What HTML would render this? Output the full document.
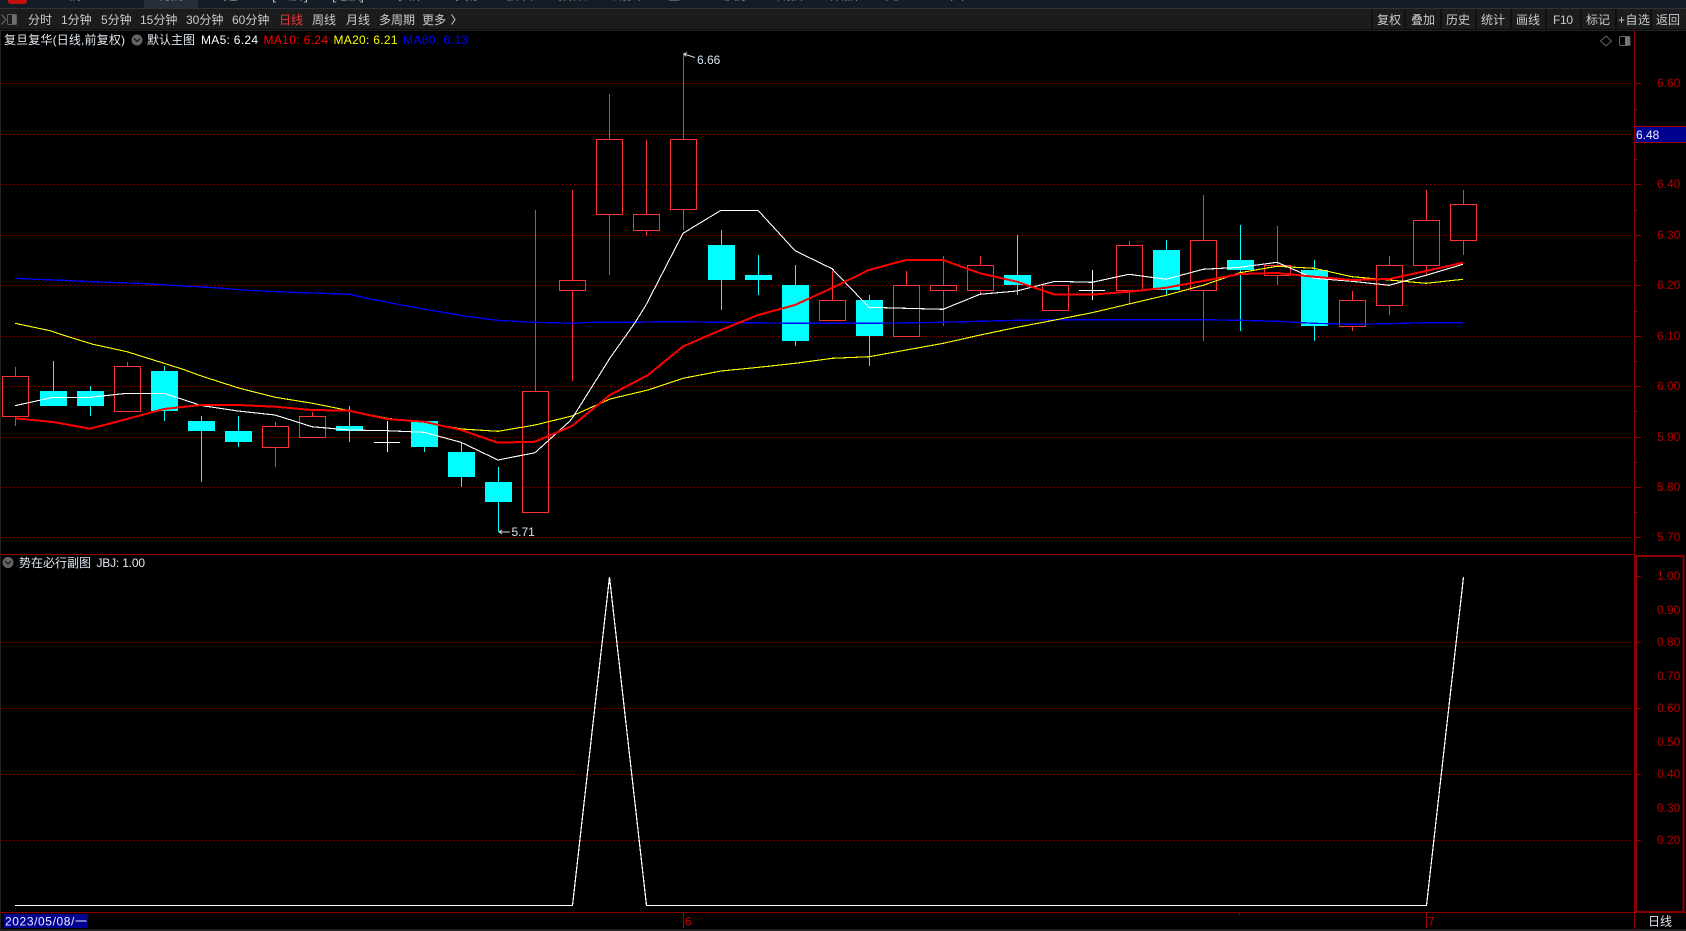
<!DOCTYPE html>
<html lang="zh-CN">
<head>
<meta charset="utf-8">
<title>复旦复华</title>
<style>
html,body{margin:0;padding:0;background:#000;width:1686px;height:931px;overflow:hidden}
svg{display:block;position:absolute;left:0;top:0}
text{font-family:"Liberation Sans","Noto Sans CJK SC",sans-serif;font-size:12px;white-space:pre}
.t{fill:#c8ccd0}
.h{fill:#dfe6ee}
.a{fill:#b00000}
.n{fill:#b8bcc0;font-size:14px}
</style>
</head>
<body>
<svg width="1686" height="931" viewBox="0 0 1686 931" xmlns="http://www.w3.org/2000/svg">
<rect width="1686" height="931" fill="#000"/>
<!-- top strip -->
<rect x="0" y="0" width="1686" height="8" fill="#141c26"/>
<rect x="0" y="8" width="1686" height="1" fill="#2b343e"/>
<rect x="144" y="0" width="54" height="8" fill="#262e38"/>
<path d="M8 0h19v2l-2 2h-15l-2-2z" fill="#c01010"/>
<g>
<text class="n" x="68" y="-0.5" textLength="9">情</text>
<text class="n" x="158" y="-0.5" textLength="26">行情</text>
<text class="n" x="222" y="-0.5" textLength="16">自选</text>
<text class="n" x="272" y="-0.5" textLength="36">[A股]</text>
<text class="n" x="332" y="-0.5" textLength="32">[港股]</text>
<text class="n" x="398" y="-0.5" textLength="22">资讯</text>
<text class="n" x="455" y="-0.5" textLength="24">交易</text>
<text class="n" x="505" y="-0.5" textLength="28">板块</text>
<text class="n" x="558" y="-0.5" textLength="29">指数</text>
<text class="n" x="613" y="-0.5" textLength="28">期货</text>
<text class="n" x="667" y="-0.5" textLength="28">基金</text>
<text class="n" x="723" y="-0.5" textLength="26">债券</text>
<text class="n" x="777" y="-0.5" textLength="26">期权</text>
<text class="n" x="830" y="-0.5" textLength="28">数据</text>
<text class="n" x="885" y="-0.5" textLength="20">图表</text>
<text class="n" x="938" y="-0.5" textLength="26">工具</text>
</g>
<!-- toolbar -->
<rect x="0" y="9" width="1686" height="20" fill="#1c1c1c"/>
<rect x="0" y="29" width="1686" height="1" fill="#0c0c0c"/>
<rect x="0" y="30" width="1686" height="1" fill="#222"/>
<path d="M1.5 14.5l4.5 5-4.5 5" fill="none" stroke="#666" stroke-width="1.2"/>
<rect x="7.5" y="14.5" width="9" height="10" rx="1" fill="#1c1c1c" stroke="#5e5e5e"/>
<rect x="12" y="15" width="4" height="9" fill="#707070"/>
<text class="t" x="28" y="24">分时</text>
<text class="t" x="61" y="24">1分钟</text>
<text class="t" x="101" y="24">5分钟</text>
<text class="t" x="140" y="24">15分钟</text>
<text class="t" x="186" y="24">30分钟</text>
<text class="t" x="232" y="24">60分钟</text>
<text x="279" y="24" fill="#f03636">日线</text>
<text class="t" x="312" y="24">周线</text>
<text class="t" x="346" y="24">月线</text>
<text class="t" x="379" y="24">多周期</text>
<text class="t" x="422" y="24">更多</text>
<path d="M451.5 14.5l3.5 5-3.5 5" fill="none" stroke="#c8ccd0"/>
<path d="M1372 9v20M1405 9v20M1441 9v20M1476 9v20M1511 9v20M1546 9v20M1581 9v20M1616 9v20M1651 9v20" stroke="#0c0c0c" stroke-width="1.5" fill="none"/>
<text class="t" x="1377" y="24">复权</text>
<text class="t" x="1411" y="24">叠加</text>
<text class="t" x="1446" y="24">历史</text>
<text class="t" x="1481" y="24">统计</text>
<text class="t" x="1516" y="24">画线</text>
<text class="t" x="1553" y="24" textLength="20">F10</text>
<text class="t" x="1586" y="24">标记</text>
<text class="t" x="1618" y="24" textLength="32">+自选</text>
<text class="t" x="1656" y="24">返回</text>
<!-- left edge -->
<rect x="0" y="31" width="1" height="898" fill="#222"/>
<g shape-rendering="crispEdges">
<!-- grid -->
<path d="M2 83.5H1634M2 134.5H1634M2 184.5H1634M2 235.5H1634M2 285.5H1634M2 336.5H1634M2 386.5H1634M2 437.5H1634M2 487.5H1634M2 537.5H1634M2 642.5H1634M2 708.5H1634M2 774.5H1634M2 840.5H1634" stroke="#b00000" stroke-dasharray="1 3" fill="none"/>
<!-- cyan candles -->
<path d="M53.5 361V391M90.5 386V416M164.5 366V421M201.5 416V482M238.5 416V447M349.5 406V442M424.5 421V452M461.5 442V487M498.5 467V532M721.5 230V310M758.5 255V295M795.5 265V346M869.5 295V366M1017.5 235V295M1166.5 240V295M1240.5 225V331M1314.5 260V341" stroke="#00ffff" fill="none"/>
<path d="M40 391h27v15h-27zM77 391h27v15h-27zM151 371h27v40h-27zM188 421h27v10h-27zM225 431h27v11h-27zM336 426h27v5h-27zM411 421h27v26h-27zM448 452h27v25h-27zM485 482h27v20h-27zM708 245h27v35h-27zM745 275h27v5h-27zM782 285h27v56h-27zM856 300h27v36h-27zM1004 275h27v10h-27zM1153 250h27v40h-27zM1227 260h27v10h-27zM1301 270h27v56h-27z" fill="#00ffff"/>
<!-- red candles -->
<path fill="none" stroke="#ff3232" d="M15.5 367V376M2.5 376.5h26v40h-26zM15.5 417V426
M127.5 362V366M114.5 366.5h26v45h-26z
M275.5 422V426M262.5 426.5h26v21h-26zM275.5 448V467
M312.5 412V416M299.5 416.5h26v21h-26z
M535.5 210V391M522.5 391.5h26v121h-26z
M572.5 190V280M559.5 280.5h26v10h-26zM572.5 291V381
M609.5 94V139M596.5 139.5h26v75h-26zM609.5 215V275
M646.5 140V214M633.5 214.5h26v16h-26zM646.5 231V235
M683.5 53V139M670.5 139.5h26v70h-26zM683.5 210V230
M832.5 271V300M819.5 300.5h26v20h-26z
M906.5 271V285M893.5 285.5h26v51h-26z
M943.5 256V285M930.5 285.5h26v5h-26zM943.5 291V326
M980.5 256V265M967.5 265.5h26v25h-26zM980.5 291V294
M1042.5 285.5h26v25h-26z
M1129.5 241V245M1116.5 245.5h26v45h-26zM1129.5 291V304
M1203.5 195V240M1190.5 240.5h26v50h-26zM1203.5 291V341
M1277.5 226V265M1264.5 265.5h26v10h-26zM1277.5 276V285
M1352.5 291V300M1339.5 300.5h26v26h-26zM1352.5 327V331
M1389.5 256V265M1376.5 265.5h26v40h-26zM1389.5 306V315
M1426.5 190V220M1413.5 220.5h26v45h-26zM1426.5 266V275
M1463.5 190V204M1450.5 204.5h26v36h-26zM1463.5 241V255"/>
<!-- doji -->
<path d="M387.5 421V452M374 442.5h26M1092.5 270V300M1079 290.5h26" stroke="#fff" fill="none"/>
<!-- MA60 -->
<polyline fill="none" stroke="#0000ff" stroke-width="1.3" points="15,278.3 35,279.3 63,280.3 82,281.3 110,282.3 137,283.3 155,284.3 173,285.3 207,287.3 222,288.3 248,290.3 267,291.3 293,292.3 322,293.3 350,294.3 367,298.3 383,301.3 400,304.7 433,310.7 467,316.3 497,320.3 533,322.3 553,322.7 573,323.3 591,322.3 633,322.3 665,321.7 683,321.7 721,322.3 795,323.3 869,323.3 943,322.3 980,321.3 1017,320.3 1055,319.7 1203,319.7 1240,320.3 1277,321.3 1314,323.3 1352,324.3 1389,323.7 1426,322.7 1463,322.7"/>
<!-- MA20 -->
<polyline fill="none" stroke="#ffff00" stroke-width="1.1" points="15,323.3 50,330.7 67,336.3 93,344.3 127,351.7 143,356.7 164,363.3 183,369.3 201.4,376 238.6,388 275.4,397.3 312.5,403.3 349.3,410.7 387.5,418.3 424.3,422.3 461.4,429 498.2,431.3 535,425 572,416 610,399 648,390 683,378.3 721,371 758.7,367.3 795.3,363.3 832.3,358.3 869.3,356.7 906.3,350 943.3,343.3 980.3,335 1017,327.3 1055,320 1092,312.7 1129,304 1166,295.3 1203,285.3 1240,272.7 1277,266.3 1314,268.3 1352,276.7 1389,280 1426,283.3 1463,279.3"/>
<!-- MA5 -->
<polyline fill="none" stroke="#ffffff" stroke-width="1.1" points="15,405.7 53,397.3 90,397.3 127,393.3 164,393.3 201,405.5 238,411 275,415 312,426.7 349,430 387,430.7 424,432.3 461,442.3 498,460 535,452.7 570,421 573,417 610,358 635,322.7 646,305 683,233.3 721,210.3 758,210.3 795,250.7 832,268.7 869,307.3 906,308.3 943,309.3 980,294.3 1017,291 1055,281.3 1092,282.3 1129,274.3 1166,279.3 1203,269.3 1240,267.3 1277,262.3 1314,278.3 1352,281.3 1389,285.3 1426,275.3 1463,264.3"/>
<!-- MA10 -->
<polyline fill="none" stroke="#ff0000" stroke-width="2" points="15,418.3 53,422 90,428.7 127,419 164,409 201,405 238,405 275,406.7 312,410 349,410.7 387,419 424,421.7 461,430 498,442.7 535,441.7 572,426 610,395 648,375 683,346.5 721,330 758,315 795,305 832,288 869,270 906,260 943,260 980,273.3 1017,281.7 1055,294.7 1092,294.7 1129,291.7 1166,287.7 1203,281 1240,274 1277,273 1314,276.7 1352,280 1389,279 1426,271 1463,262.7"/>
<!-- sub chart line -->
<polyline fill="none" stroke="#ffffff" stroke-width="1.2" points="15,905.5 572.5,905.5 609.5,577 646.5,905.5 1426.5,905.5 1463.5,577"/>
<!-- panel borders -->
<path d="M0 554.5H1634M0 912.5H1686M1634.5 31V929" stroke="#8a0000" fill="none"/>
<rect x="1636" y="556" width="47.5" height="356" fill="none" stroke="#8a0000" stroke-width="2"/>
<!-- ticks main -->
<path d="M1635 83.5h6M1635 184.5h6M1635 235.5h6M1635 285.5h6M1635 336.5h6M1635 386.5h6M1635 437.5h6M1635 487.5h6M1635 537.5h6M1635 109.5h3M1635 159.5h3M1635 210.5h3M1635 260.5h3M1635 311.5h3M1635 361.5h3M1635 411.5h3M1635 462.5h3M1635 512.5h3" stroke="#8a0000" fill="none"/>
<path d="M1635 576.5h6M1635 642.5h6M1635 708.5h6M1635 774.5h6M1635 840.5h6M1635 609.5h2M1635 675.5h2M1635 741.5h2M1635 807.5h2" stroke="#8a0000" fill="none"/>
<!-- price box -->
<rect x="1635" y="127" width="51" height="15" fill="#000090"/>
<path d="M1635 126.5h51M1635 142.5h51" stroke="#a00000" fill="none"/>
<!-- date axis -->
<rect x="4" y="914" width="84" height="14" fill="#000090"/>
<path d="M683.5 913V928M1426.5 913V928M1239.5 913V915" stroke="#a00000" fill="none"/>
<rect x="0" y="929" width="1686" height="2" fill="#222"/>
</g>
<!-- header -->
<text class="h" x="4" y="44" textLength="121">复旦复华(日线,前复权)</text>
<circle cx="137" cy="40" r="5.5" fill="#666"/>
<path d="M134 38.5l3 3 3-3" fill="none" stroke="#1a1a1a" stroke-width="1.4"/>
<text class="h" x="147" y="44">默认主图</text>
<text x="201" y="44" fill="#fff" textLength="57">MA5: 6.24</text>
<text x="263.5" y="44" fill="#ff0000" textLength="64.5">MA10: 6.24</text>
<text x="333.5" y="44" fill="#ffff00" textLength="64">MA20: 6.21</text>
<text x="403" y="44" fill="#0000ff" textLength="65">MA60: 6.13</text>
<!-- top right icons -->
<path d="M1606 36l5.5 5-5.5 5-5.5-5z" fill="none" stroke="#666"/>
<rect x="1619.5" y="36.5" width="10.5" height="9" rx="1.5" fill="none" stroke="#666"/>
<rect x="1625" y="37" width="4.5" height="8" fill="#777"/>
<!-- price labels -->
<text class="a" x="1657" y="87">6.60</text>
<text class="a" x="1657" y="188">6.40</text>
<text class="a" x="1657" y="239">6.30</text>
<text class="a" x="1657" y="289">6.20</text>
<text class="a" x="1657" y="340">6.10</text>
<text class="a" x="1657" y="390">6.00</text>
<text class="a" x="1657" y="441">5.90</text>
<text class="a" x="1657" y="491">5.80</text>
<text class="a" x="1657" y="541">5.70</text>
<text x="1636" y="139" fill="#f0f0ff">6.48</text>
<!-- hi/lo marks -->
<path d="M684 54l11 3.5M684 54l3-1.5M684 54l2 2.5" stroke="#ddd" fill="none"/>
<text x="697" y="64" fill="#d8e4f0">6.66</text>
<path d="M499 532h11M499 532l3-2M499 532l3 2" stroke="#ddd" fill="none"/>
<text x="511.5" y="536" fill="#d8e4f0">5.71</text>
<!-- sub header -->
<circle cx="8" cy="562.5" r="5.5" fill="#666"/>
<path d="M5 561l3 3 3-3" fill="none" stroke="#1a1a1a" stroke-width="1.4"/>
<text class="h" x="19" y="567">势在必行副图</text>
<text class="h" x="96.5" y="567" textLength="48.5">JBJ: 1.00</text>
<!-- sub labels -->
<text class="a" x="1657" y="580">1.00</text>
<text class="a" x="1657" y="614">0.90</text>
<text class="a" x="1657" y="646">0.80</text>
<text class="a" x="1657" y="680">0.70</text>
<text class="a" x="1657" y="712">0.60</text>
<text class="a" x="1657" y="746">0.50</text>
<text class="a" x="1657" y="778">0.40</text>
<text class="a" x="1657" y="812">0.30</text>
<text class="a" x="1657" y="844">0.20</text>
<!-- date axis text -->
<text x="5" y="925.5" fill="#f0f0ff" textLength="82">2023/05/08/一</text>
<text x="685" y="925.5" fill="#d00000">6</text>
<text x="1428" y="925.5" fill="#d00000">7</text>
<text class="h" x="1648" y="925.5">日线</text>
</svg>
</body>
</html>
